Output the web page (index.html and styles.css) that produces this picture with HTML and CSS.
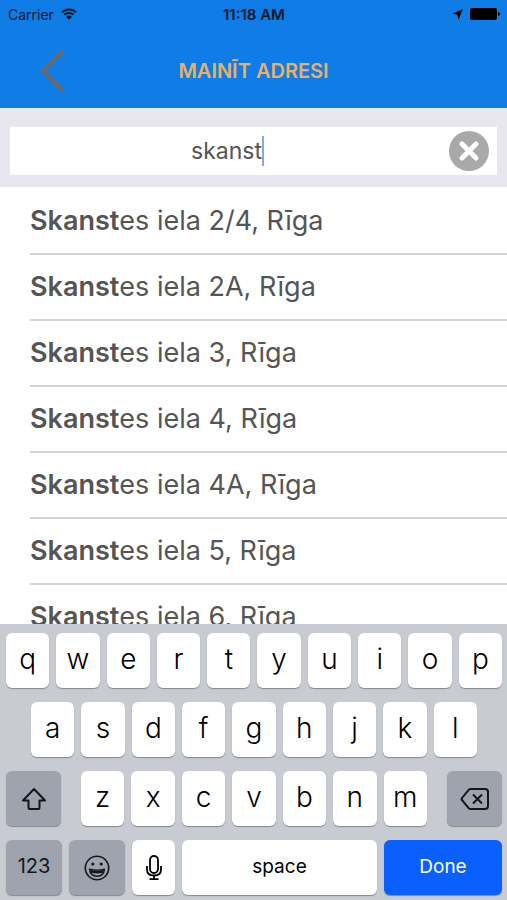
FILE: index.html
```html
<!DOCTYPE html>
<html lang="lv">
<head>
<meta charset="utf-8">
<meta name="viewport" content="width=device-width, initial-scale=1">
<title>Mainīt adresi</title>
<link rel="stylesheet" href="styles.css">
</head>
<body>
<header class="top">
  <div class="status">
    <div class="status-left">
      <span>Carrier</span>
      <svg class="wifi" viewBox="0 0 16 12" aria-hidden="true"><path d="M1 4.300a10 10 0 0 1 14 0M3.400 6.800a6.600 6.600 0 0 1 9.200 0" fill="none" stroke="currentColor" stroke-width="2"/><path d="M8 11.800 5.200 8.900a4 4 0 0 1 5.600 0z" fill="currentColor"/></svg>
    </div>
    <time class="clock">11:18 AM</time>
    <div class="status-right">
      <svg class="locate" viewBox="0 0 11 11" aria-hidden="true"><path d="M10.800.2 6.500 10.800 5.300 5.700.2 4.700z" fill="currentColor"/></svg>
      <svg class="battery" viewBox="0 0 30 12" aria-hidden="true"><rect width="27" height="12" rx="2" fill="currentColor"/><path d="M28 4q2 .5 2 2t-2 2z" fill="currentColor"/></svg>
    </div>
  </div>
  <div class="nav">
    <button class="back" type="button" aria-label="Atpakaļ"><svg viewBox="0 0 26 44" aria-hidden="true"><path d="M23 2 3 22l20 20" fill="none" stroke="currentColor" stroke-width="4"/></svg></button>
    <h1 class="title">MAINĪT ADRESI</h1>
  </div>
</header>

<form class="search">
  <div class="field">
    <div class="entry">
      <input class="input" type="text" value="skanst" aria-label="Adrese" autocomplete="off">
      <span class="caret"></span>
    </div>
    <button class="clear" type="reset" aria-label="Notīrīt"><svg viewBox="0 0 40 40" aria-hidden="true"><circle cx="20" cy="20" r="20" fill="#a9a9a9"/><path d="m13 13 14 14M27 13 13 27" stroke="#fff" stroke-width="5" stroke-linecap="round"/></svg></button>
  </div>
</form>

<main class="results">
  <ul class="list">
    <li class="item"><a class="link" href="#"><b>Skanst</b>es iela 2/4, Rīga</a></li>
    <li class="item"><a class="link" href="#"><b>Skanst</b>es iela 2A, Rīga</a></li>
    <li class="item"><a class="link" href="#"><b>Skanst</b>es iela 3, Rīga</a></li>
    <li class="item"><a class="link" href="#"><b>Skanst</b>es iela 4, Rīga</a></li>
    <li class="item"><a class="link" href="#"><b>Skanst</b>es iela 4A, Rīga</a></li>
    <li class="item"><a class="link" href="#"><b>Skanst</b>es iela 5, Rīga</a></li>
    <li class="item"><a class="link" href="#"><b>Skanst</b>es iela 6, Rīga</a></li>
  </ul>
</main>

<section class="keyboard" aria-label="Keyboard">
  <div class="keys">
    <button class="key">q</button><button class="key">w</button><button class="key">e</button><button class="key">r</button><button class="key">t</button><button class="key">y</button><button class="key">u</button><button class="key">i</button><button class="key">o</button><button class="key">p</button>
  </div>
  <div class="keys keys-inset">
    <button class="key">a</button><button class="key">s</button><button class="key">d</button><button class="key">f</button><button class="key">g</button><button class="key">h</button><button class="key">j</button><button class="key">k</button><button class="key">l</button>
  </div>
  <div class="keys keys-third">
    <button class="key key-dark key-side" aria-label="Shift"><svg class="icon" viewBox="0 0 26 24" aria-hidden="true"><path d="M13 2 2 13.500h5.500V21q0 1 1 1h9q1 0 1-1v-7.500H24z" fill="none" stroke="currentColor" stroke-width="2" stroke-linejoin="round"/></svg></button>
    <div class="keys letters">
      <button class="key">z</button><button class="key">x</button><button class="key">c</button><button class="key">v</button><button class="key">b</button><button class="key">n</button><button class="key">m</button>
    </div>
    <button class="key key-dark key-side" aria-label="Delete"><svg class="icon icon-wide" viewBox="0 0 30 24" aria-hidden="true"><path d="M10.500 2H25q3 0 3 3v14q0 3-3 3H10.500q-1 0-1.800-.9L2 13q-.8-1 0-2l6.700-8.100Q9.500 2 10.500 2z" fill="none" stroke="currentColor" stroke-width="2"/><path d="m13 7.500 9 9m0-9-9 9" stroke="currentColor" stroke-width="2"/></svg></button>
  </div>
  <div class="keys">
    <button class="key key-dark key-mode key-digits">123</button>
    <button class="key key-dark key-mode" aria-label="Emoji"><svg class="icon" viewBox="0 0 26 26" aria-hidden="true"><circle cx="13" cy="13" r="11.700" fill="none" stroke="currentColor" stroke-width="1.600"/><circle cx="8.800" cy="9" r="1.600" fill="currentColor"/><circle cx="17.200" cy="9" r="1.600" fill="currentColor"/><path d="M5.500 14.200q7.500 1.800 15 0-.8 7-7.500 7t-7.500-7z" fill="none" stroke="currentColor" stroke-width="1.400" stroke-linejoin="round"/><path d="M6 15q7 1.800 14 0l-1 2.800q-6 1.400-12 0z" fill="currentColor"/></svg></button>
    <button class="key key-mic" aria-label="Dictate"><svg class="icon" viewBox="0 0 26 26" aria-hidden="true"><rect x="9" y="1" width="8" height="17" rx="4" fill="none" stroke="currentColor" stroke-width="1.800"/><path d="M6 11v3.500q0 6 7 6t7-6V11M13 20.500V24M8.500 24.200h9" fill="none" stroke="currentColor" stroke-width="1.800"/></svg></button>
    <button class="key key-space key-word">space</button>
    <button class="key key-done key-word">Done</button>
  </div>
</section>
</body>
</html>
```
FILE: styles.css
```css
* {
  box-sizing: border-box;
}

body {
  margin: 0;
  height: 100vh;
  display: flex;
  flex-direction: column;
  overflow: hidden;
  background: #fff;
  color: #555;
  font-family: Inter, "Liberation Sans", sans-serif;
}

button {
  margin: 0;
  padding: 0;
  border: 0;
  background: none;
  color: inherit;
  font: inherit;
}

svg {
  display: block;
}

.top {
  flex: none;
  background: #107ce5;
  padding-bottom: 12px;
}

.status {
  display: grid;
  grid-template-columns: 1fr auto 1fr;
  align-items: center;
  height: 28px;
  padding: 0 7px 0 8px;
  color: #06182c;
  font-size: 14px;
}

.status-left,
.status-right {
  display: flex;
  align-items: center;
  gap: 7px;
}

.status-right {
  justify-content: flex-end;
  color: #000;
}

.clock {
  font-size: 15px;
  font-weight: 600;
}

.wifi {
  width: 16px;
  height: 12px;
}

.locate {
  width: 11px;
  height: 11px;
}

.battery {
  width: 30px;
  height: 12px;
}

.nav {
  display: grid;
  grid-template-columns: 74px 1fr 74px;
  align-items: center;
  height: 68px;
  padding-top: 18px;
}

.back {
  justify-self: end;
  width: 34px;
  height: 44px;
  color: #6c6a68;
}

.back svg {
  width: 26px;
  height: 44px;
}

.title {
  margin: 0;
  color: #e9b066;
  font-size: 20px;
  font-weight: 600;
  text-align: center;
}

.search {
  flex: none;
  padding: 19px 10px 12px;
  background: #e8e6ee;
}

.field {
  display: flex;
  align-items: center;
  height: 48px;
  padding-right: 8px;
  background: #fff;
}

.entry {
  position: relative;
  flex: 1;
  margin-right: 6px;
}

.input {
  display: block;
  width: 100%;
  height: 48px;
  padding: 0;
  border: 0;
  outline: 0;
  background: none;
  color: #555;
  font: inherit;
  font-size: 23px;
  text-align: center;
}

.caret {
  position: absolute;
  top: 9px;
  left: calc(50% + 35px);
  width: 2px;
  height: 30px;
  background: #8f9ff0;
}

.clear,
.clear svg {
  width: 40px;
  height: 40px;
}

.results {
  flex: 1;
  min-height: 0;
  overflow: hidden;
}

.list {
  margin: 0;
  padding: 2px 0 0 30px;
  list-style: none;
}

.item {
  border-bottom: 2px solid #d4d4d6;
}

.link {
  display: block;
  color: #555;
  font-size: 27px;
  line-height: 64px;
  white-space: nowrap;
  text-decoration: none;
}

.link b {
  font-weight: 600;
}

.keyboard {
  flex: none;
  display: grid;
  gap: 14px;
  padding: 9px 5px 5px 6px;
  background: #c9cbd3;
  color: #000;
}

.keys {
  display: flex;
  gap: 7px;
}

.keys-inset {
  padding: 0 25px;
}

.keys-third {
  gap: 20px;
}

.letters {
  flex: 1;
}

.key {
  display: flex;
  flex: 1;
  justify-content: center;
  height: 55px;
  border-radius: 6px;
  background: #fff;
  box-shadow: 0 1px 1px #85888e;
  font-size: 28px;
  font-weight: 300;
  line-height: 53px;
}

.key-dark {
  background: #9ea3ad;
  color: #14161b;
}

.key-side {
  flex: none;
  width: 55px;
}

.key-mode {
  flex: none;
  width: 56px;
}

.key-mic {
  flex: none;
  width: 43px;
}

.key-done {
  flex: none;
  width: 118px;
  background: #0a60ff;
  color: #fff;
}

.key-word {
  font-size: 19px;
  font-weight: 400;
}

.key-digits {
  font-size: 20px;
  font-weight: 400;
}

.key:has(svg) {
  align-items: center;
}

.icon {
  width: 26px;
  height: 26px;
}

.icon-wide {
  width: 30px;
  height: 24px;
}
```
